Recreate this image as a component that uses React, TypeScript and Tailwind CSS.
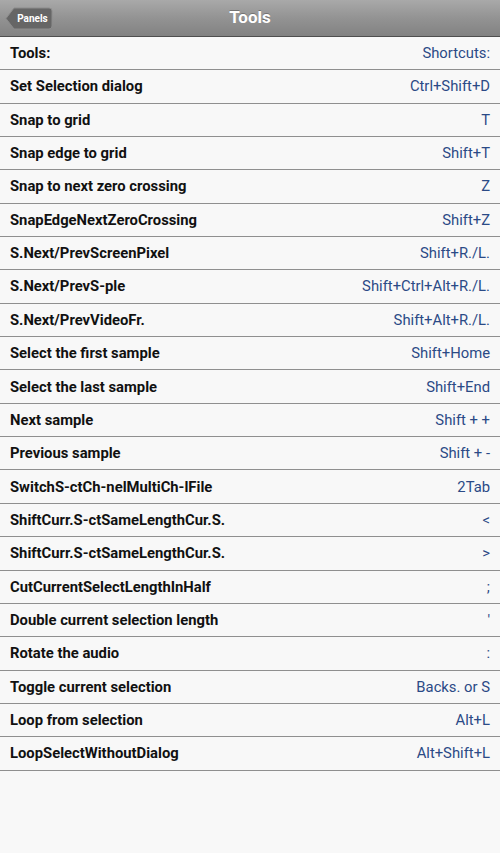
import React from 'react';

const rows: [string, string][] = [
  ['Tools:', 'Shortcuts:'],
  ['Set Selection dialog', 'Ctrl+Shift+D'],
  ['Snap to grid', 'T'],
  ['Snap edge to grid', 'Shift+T'],
  ['Snap to next zero crossing', 'Z'],
  ['SnapEdgeNextZeroCrossing', 'Shift+Z'],
  ['S.Next/PrevScreenPixel', 'Shift+R./L.'],
  ['S.Next/PrevS-ple', 'Shift+Ctrl+Alt+R./L.'],
  ['S.Next/PrevVideoFr.', 'Shift+Alt+R./L.'],
  ['Select the first sample', 'Shift+Home'],
  ['Select the last sample', 'Shift+End'],
  ['Next sample', 'Shift + +'],
  ['Previous sample', 'Shift + -'],
  ['SwitchS-ctCh-nelMultiCh-lFile', '2Tab'],
  ['ShiftCurr.S-ctSameLengthCur.S.', '<'],
  ['ShiftCurr.S-ctSameLengthCur.S.', '>'],
  ['CutCurrentSelectLengthInHalf', ';'],
  ['Double current selection length', "'"],
  ['Rotate the audio', ':'],
  ['Toggle current selection', 'Backs. or S'],
  ['Loop from selection', 'Alt+L'],
  ['LoopSelectWithoutDialog', 'Alt+Shift+L'],
];

const BackButton: React.FC = () => (
  <button className="relative w-[48px] h-[23px] ml-[5px]">
    <svg className="absolute inset-0" width="48" height="23" viewBox="0 0 48 23">
      <path
        d="M1 11.5 L9 1 H44 Q47 1 47 4 V19 Q47 22 44 22 H9 Z"
        fill="#666666"
        stroke="#8c8c8c"
        strokeWidth="1"
      />
    </svg>
    <span className="relative block pl-[7px] text-[10px] font-bold text-white leading-[23px]">Panels</span>
  </button>
);

const App: React.FC = () => {
  return (
    <div className="w-[500px] h-[853px] bg-[#f8f8f8] flex flex-col overflow-hidden" style={{ fontFamily: 'Roboto, "Liberation Sans", sans-serif' }}>
      <div className="relative h-[37px] shrink-0 flex items-center bg-gradient-to-b from-[#a9a9a9] via-[#939393] to-[#828282] border-b border-[#4f4f4f]">
        <BackButton />
        <h1 className="absolute inset-0 flex items-center justify-center text-[17px] font-bold text-white [text-shadow:0_-1px_0_rgba(0,0,0,0.25)] pointer-events-none">
          Tools
        </h1>
      </div>

      <div className="flex flex-col">
        {rows.map(([label, key], i) => (
          <div
            key={i}
            className="h-[33.35px] flex items-center justify-between px-[10px] border-b border-[#8f8f8f]"
          >
            <span className="text-[14.8px] font-bold text-[#111111]">{label}</span>
            <span className="text-[14.8px] text-[#2b4a86]">{key}</span>
          </div>
        ))}
      </div>
    </div>
  );
};

export default App;
